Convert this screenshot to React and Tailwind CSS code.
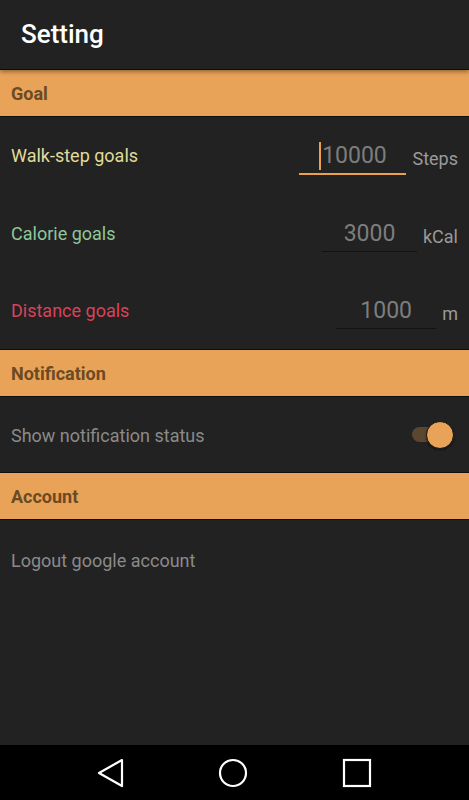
import React from 'react';

const font = { fontFamily: 'Roboto, "Noto Sans", sans-serif' };

const SectionHeader = ({ title }) => (
  <div className="h-[47px] shrink-0 bg-[#e8a358] border-b border-[#0f0f0f] flex items-center px-[11px]">
    <span className="text-[18px] font-bold text-[#6b4a24]">{title}</span>
  </div>
);

const GoalRow = ({ label, color, value, unit, width, focused, height }) => (
  <div className={`${height} flex items-center pl-[11px] pr-[11px]`}>
    <span className={`flex-1 text-[18px] -mt-[2px] ${color}`}>{label}</span>
    <div
      className={`${width} mt-[4px] flex justify-center pb-[3px] ${
        focused ? 'border-b-2 border-[#eda04c]' : 'border-b border-[#121212]'
      }`}
    >
      <span className="flex items-center leading-[28px] text-[23px] text-[#7d7d7d]">
        {focused && <span className="w-[2px] h-[28px] bg-[#eda04c] mr-[1px]" />}
        {value}
      </span>
    </div>
    <span className="ml-[6px] mt-[4px] text-[18px] text-[#9a9a9a]">{unit}</span>
  </div>
);

export default function App() {
  return (
    <div className="w-[469px] h-[800px] flex flex-col bg-[#222222]" style={font}>
      {/* Toolbar */}
      <div className="h-[70px] shrink-0 bg-[#222222] border-b border-[#0c0c0c] flex items-center px-[21px] relative z-10 shadow-[0_2px_4px_rgba(0,0,0,0.35)]">
        <span className="text-[26px] font-medium text-white">Setting</span>
      </div>

      <div className="flex-1 flex flex-col">
        <SectionHeader title="Goal" />
        <GoalRow
          label="Walk-step goals"
          color="text-[#e1db9b]"
          value="10000"
          unit="Steps"
          width="w-[107px]"
          focused
          height="h-[78px]"
        />
        <GoalRow
          label="Calorie goals"
          color="text-[#8fc69a]"
          value="3000"
          unit="kCal"
          width="w-[95px]"
          height="h-[78px]"
        />
        <GoalRow
          label="Distance goals"
          color="text-[#d9435a]"
          value="1000"
          unit="m"
          width="w-[100px]"
          height="h-[76px]"
        />
        <div className="border-b border-[#0f0f0f]" />

        <SectionHeader title="Notification" />
        <div className="h-[76px] flex items-center pl-[11px] pr-[15px] border-b border-[#0f0f0f]">
          <span className="flex-1 text-[18px] text-[#8a8a8a] mt-[2px]">Show notification status</span>
          {/* Switch */}
          <div className="relative w-[42px] h-[28px] flex items-center">
            <div className="w-[36px] h-[15px] rounded-full bg-[#5b4631]" />
            <div className="absolute right-0 top-0 w-[28px] h-[28px] rounded-full bg-[#e8a358] border border-[#141414] shadow-[0_1px_2px_rgba(0,0,0,0.5)]" />
          </div>
        </div>

        <SectionHeader title="Account" />
        <div className="h-[80px] flex items-center px-[11px]">
          <span className="text-[18px] text-[#8a8a8a]">Logout google account</span>
        </div>
      </div>

      {/* Navigation bar */}
      <div className="h-[55px] shrink-0 bg-black flex items-center pl-[96px]">
        <svg width="28" height="30" viewBox="0 0 28 30" fill="none" stroke="white" strokeWidth="2.2" strokeLinejoin="round">
          <path d="M26 2 L3 15 L26 28 Z" />
        </svg>
        <svg className="ml-[94px]" width="30" height="30" viewBox="0 0 30 30" fill="none" stroke="white" strokeWidth="2.2">
          <circle cx="15" cy="15" r="13" />
        </svg>
        <svg className="ml-[94px]" width="30" height="30" viewBox="0 0 30 30" fill="none" stroke="white" strokeWidth="2.2">
          <rect x="2" y="2" width="26" height="26" />
        </svg>
      </div>
    </div>
  );
}
